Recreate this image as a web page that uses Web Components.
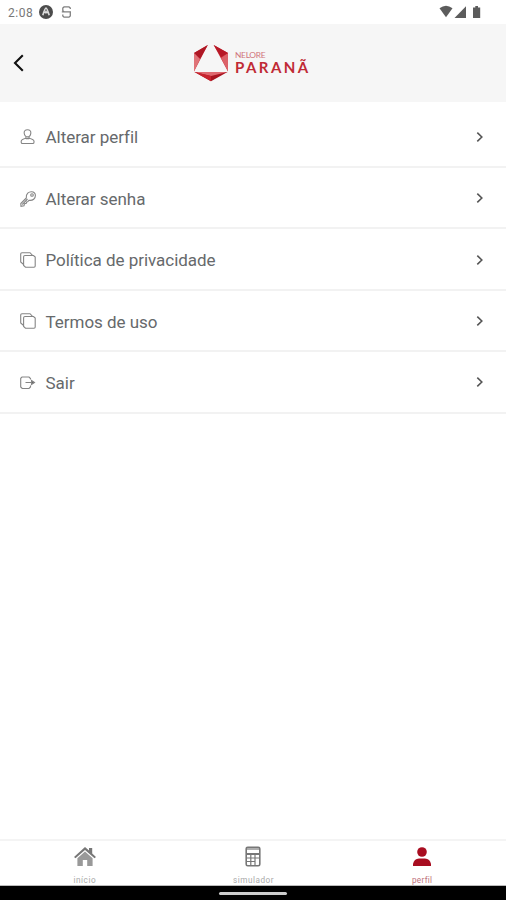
<!DOCTYPE html>
<html lang="pt-BR">
<head>
<meta charset="utf-8">
<title>Nelore Paraná</title>
<style>
body{margin:0;font-family:Roboto,"Liberation Sans",sans-serif;background:#fff}
</style>
</head>
<body>
<profile-screen></profile-screen>
<script>
const define=(name,html)=>customElements.define(name,class extends HTMLElement{
  constructor(){
    super();
    const t=document.createElement('template');
    t.innerHTML=html;
    this.attachShadow({mode:'open'}).append(t.content.cloneNode(true));
  }
});

define('status-bar',`<style>
:host{display:flex;height:24px;box-sizing:border-box;padding:0 24px 0 8px;align-items:center;color:#777;background:#fff}
span{font-size:12px;letter-spacing:.55px;width:31px;line-height:24px;padding-top:1px;white-space:nowrap}
svg{display:block}.r{margin-left:auto}
</style>
<span>2:08</span>
<svg width="36" height="24" viewBox="0 0 36 24"><circle cx="7" cy="12" r="7" fill="#4c4c4c"/><path d="M3.8 15.2Q6 8 7 8T10.2 15.2M5.8 13.2L7 11.5L8.4 13.2" fill="none" stroke="#ddd" stroke-width="1.6"/><path d="M31.3 9V8L30 6.9H25L23.8 8V10.6L25 11.8H31.3V16L30 17.2H25L23.8 16V14.6M22.8 11.8H32" fill="none" stroke="#808080" stroke-width="1.3"/></svg>
<svg class="r" width="43" height="24" viewBox="0 0 43 24" fill="#5c5c5c"><path d="M0.5 8.2Q7 3.2 13.5 8.2L7 17.2Z"/><path d="M15.5 18L27 6.3V18Z"/><path d="M34 7.5H36.3V6H39V7.5H41.2V18H34Z"/></svg>`);

define('brand-logo',`<style>
:host{display:flex;width:118px;height:40px;color:#c02a35}
svg{display:block;flex:none}
.words{display:flex;flex-direction:column;margin-left:6px;padding-top:8px;font-family:Lato,sans-serif;white-space:nowrap}
.a{font-size:8.4px;line-height:8px;font-weight:400;letter-spacing:-.3px;color:#d0747b}
.b{font-size:15px;line-height:17px;font-weight:700;letter-spacing:2.45px}
</style>
<svg width="36" height="40" viewBox="0 0 36 40">
<path d="M14.8 2L1 10V28.5Z" fill="#cb3540"/><path d="M14.8 2L1 10L7 16Z" fill="#ae1724"/><path d="M1 10L7 16L1 28.5Z" fill="#e07378"/>
<path d="M20.7 2L35 10V28.5Z" fill="#c82d38"/><path d="M35 10L28 15L35 28.5Z" fill="#dc6269"/><path d="M20.7 2L35 10L28 14Z" fill="#b71927"/>
<path d="M1.5 29H34.5L18 38.3Z" fill="#a91420"/><path d="M1.5 29H34.5L18 33Z" fill="#df686f"/><path d="M1.5 29L18 33V38.3Z" fill="#c8232e"/>
</svg>
<div class="words"><div class="a">NELORE</div><div class="b">PARANÃ</div></div>`);

define('app-header',`<style>
:host{display:grid;grid-template-columns:193px 118px 1fr;height:78px;background:#f6f6f6;align-items:center}
svg{display:block;margin-left:12px}
</style>
<svg width="14" height="20" viewBox="0 0 14 20"><path d="M10.8 2.3L3 10L10.8 17.7" fill="none" stroke="#111" stroke-width="2.1"/></svg>
<brand-logo></brand-logo>`);

define('menu-row',`<style>
:host{display:flex;box-sizing:border-box;height:61.35px;padding:0 20px;align-items:center;border-bottom:2px solid #f2f2f2;color:#66696b}
.icon{width:16px;height:16px;margin-right:9.5px;padding-top:1.4px}
.label{font-size:17px;line-height:24px;letter-spacing:-.03px;padding-top:2px;white-space:nowrap}
.chev{display:block;margin-left:auto;padding-top:1px}
</style>
<div class="icon"><slot name="icon"></slot></div><div class="label"><slot></slot></div>
<svg class="chev" width="12" height="14" viewBox="0 0 12 14"><path d="M3.3 2.7L7.8 7L3.3 11.3" fill="none" stroke="#555" stroke-width="1.6"/></svg>`);

define('tab-item',`<style>
:host{display:flex;flex-direction:column;align-items:center;color:#aaa;padding:4.5px 0 0 1px}
.label{font-size:8.2px;line-height:10px;margin-top:7.5px;letter-spacing:.5px}
:host([active]){color:#c0717b}
:host([active]) .label{letter-spacing:.3px}
</style>
<slot name="icon"></slot><div class="label"><slot></slot></div>`);

define('tab-bar',`<style>
:host{display:grid;grid-template-columns:repeat(3,1fr);height:47px;box-sizing:border-box;border-top:2px solid #f4f4f4;border-bottom:1px solid #bbb;background:#fff}
svg{display:block}
</style>
<tab-item><svg slot="icon" width="22" height="22" viewBox="0 0 22 22"><path d="M0 11L11 1L15 4.5V2H18.2V7.5L22 11L20.5 12.3L11 4L1.5 12.3Z" fill="#777"/><path d="M3.4 12.2L11 5.5L18.6 12.2V20H13.2V14H8.8V20H3.4Z" fill="#999"/></svg>início</tab-item>
<tab-item><svg slot="icon" width="22" height="22" viewBox="0 0 22 22" fill="none" stroke="#777"><rect x="4.2" y="1.2" width="13.6" height="18.6" rx="1.5" stroke-width="1.6"/><path d="M5 8H17" stroke-width="2"/><path d="M5 3H17" stroke-width="1.2"/><path d="M5 12H17M5 15.5H13M8.8 9V19M13 9V19" stroke-width="1.2"/></svg>simulador</tab-item>
<tab-item active><svg slot="icon" width="22" height="22" viewBox="0 0 22 22" fill="#a80d20"><circle cx="11" cy="6" r="4.8"/><path d="M2 20V18Q3 12.8 8 12.5H14Q19 12.8 20 18V20Z"/></svg>perfil</tab-item>`);

define('home-indicator',`<style>
:host{display:flex;height:14px;background:#000;justify-content:center;align-items:center}
i{display:block;width:68px;height:3px;border-radius:2px;background:#ccc;margin-top:1px}
</style><i></i>`);

const icon=p=>`<svg slot="icon" width="16" height="16" viewBox="0 0 16 16" fill="none" stroke="#858585" stroke-width="1.1">${p}</svg>`;
const copy=icon('<path d="M3.6 12.5L.7 10V2Q.7.7 2 .7H10L12.5 3.3"/><path d="M5 3.5H13.5L15.2 5V14Q15.2 15.2 14 15.2H5.5L3.6 13.5V4.8Q3.6 3.5 5 3.5Z"/>');
define('profile-screen',`<style>
:host{display:flex;flex-direction:column;height:900px;overflow:hidden}
main{flex:1;padding-top:4.8px}
svg{display:block}
</style>
<status-bar></status-bar><app-header></app-header>
<main>
<menu-row>${icon('<path d="M7.5.7C10 .7 11.1 2.3 10.8 4.3C10.5 6.5 9.3 7.9 7.5 7.9S4.5 6.5 4.2 4.3C3.9 2.3 5 .7 7.5 .7ZM5.9 7.6V9.2C3 10 1.2 10.8 1.2 12.2V13.2Q1.2 14.5 2.5 14.5H12.7Q14 14.5 14 13.2V12.2C14 10.8 12 10 9.1 9.2V7.6M5.9 9.6H9.1"/>')}Alterar perfil</menu-row>
<menu-row>${icon('<path d="M6.3 7C5.7 2.5 9 .6 11.5 .7C13.8 .8 15.4 2.2 15.4 4.5C15.4 7.5 13 9.8 9 9.3L7.6 10.8L6.6 10.9L6.3 12.3L4.5 12.7L4 14.8L1 15.3L.8 12.5Z"/><path d="M2.3 13.5L7.5 8"/><circle cx="12" cy="4" r="1.3"/>')}Alterar senha</menu-row>
<menu-row>${copy}Política de privacidade</menu-row>
<menu-row>${copy}Termos de uso</menu-row>
<menu-row>${icon('<path d="M10.5 4.5V3.5L9 2H2L.7 3.3V12L2.2 13.5H9L10.5 12V10.5M5.5 7.5H12"/><path d="M11.5 5.5L14.5 7.5L11.5 9.5Z" fill="#666"/>')}Sair</menu-row>
</main>
<tab-bar></tab-bar><home-indicator></home-indicator>`);
</script>
</body>
</html>
